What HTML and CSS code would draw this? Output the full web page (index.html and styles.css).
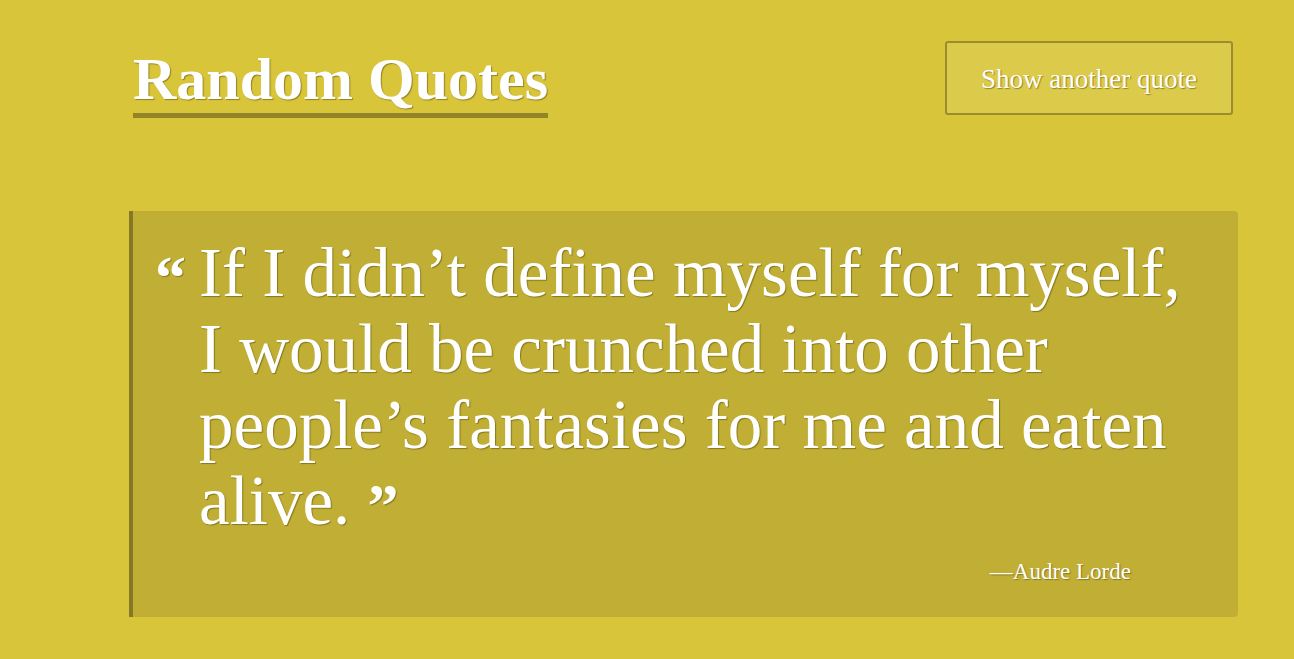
FILE: index.html
```html
<!DOCTYPE html>
<html lang="en">
<head>
<meta charset="utf-8">
<title>Random Quotes</title>
<link rel="stylesheet" href="styles.css">
</head>
<body>
<div class="page">
  <header class="header">
    <h1 class="title">Random Quotes</h1>
    <button class="btn" type="button">Show another quote</button>
  </header>
  <blockquote class="quote">
    <p class="quote-text"><span class="mark-open">“</span>If I didn’t define myself for myself,<br>I would be crunched into other<br>people’s fantasies for me and eaten<br>alive. <span class="mark-close">”</span></p>
    <p class="author">—Audre Lorde</p>
  </blockquote>
</div>
</body>
</html>
```

FILE: styles.css
```css
html, body {
  margin: 0;
  padding: 0;
}
body {
  background: #d9c53a;
  font-family: "Liberation Serif", "Times New Roman", serif;
  color: #ffffff;
  text-shadow: 1px 1px 1px rgba(90, 75, 10, 0.55);
}
.page {
  padding: 41px 56px 0 129px;
}
.header {
  display: flex;
  justify-content: space-between;
  align-items: flex-start;
  padding-left: 4px;
  padding-right: 5px;
}
.title {
  margin: 0;
  font-size: 60px;
  font-weight: 700;
  line-height: 68px;
  padding-top: 4px;
  border-bottom: 5px solid #948428;
}
.btn {
  width: 288px;
  height: 74px;
  background: #dccb4b;
  border: 2px solid #9c8c30;
  border-radius: 3px;
  color: #ffffff;
  font-family: inherit;
  font-size: 27px;
  text-shadow: 1px 1px 1px rgba(90, 75, 10, 0.55);
  padding: 2px 0 0 0;
  cursor: pointer;
}
.quote {
  margin: 93px 0 0 0;
  background: #c0af34;
  border-left: 4px solid #877826;
  border-radius: 0 4px 4px 0;
  padding: 24px 20px 32px 0;
}
.quote-text {
  margin: 0;
  font-size: 69px;
  line-height: 76px;
  padding-left: 66px;
  text-indent: -44px;
  white-space: nowrap;
}
.mark-open,
.mark-close {
  font-size: 62px;
  font-weight: 700;
  line-height: 0;
  vertical-align: -2px;
}
.mark-open {
  margin-right: 13px;
}
.author {
  margin: 20px 0 0 0;
  text-align: right;
  padding-right: 87px;
  font-size: 23px;
  line-height: 26px;
}
```
